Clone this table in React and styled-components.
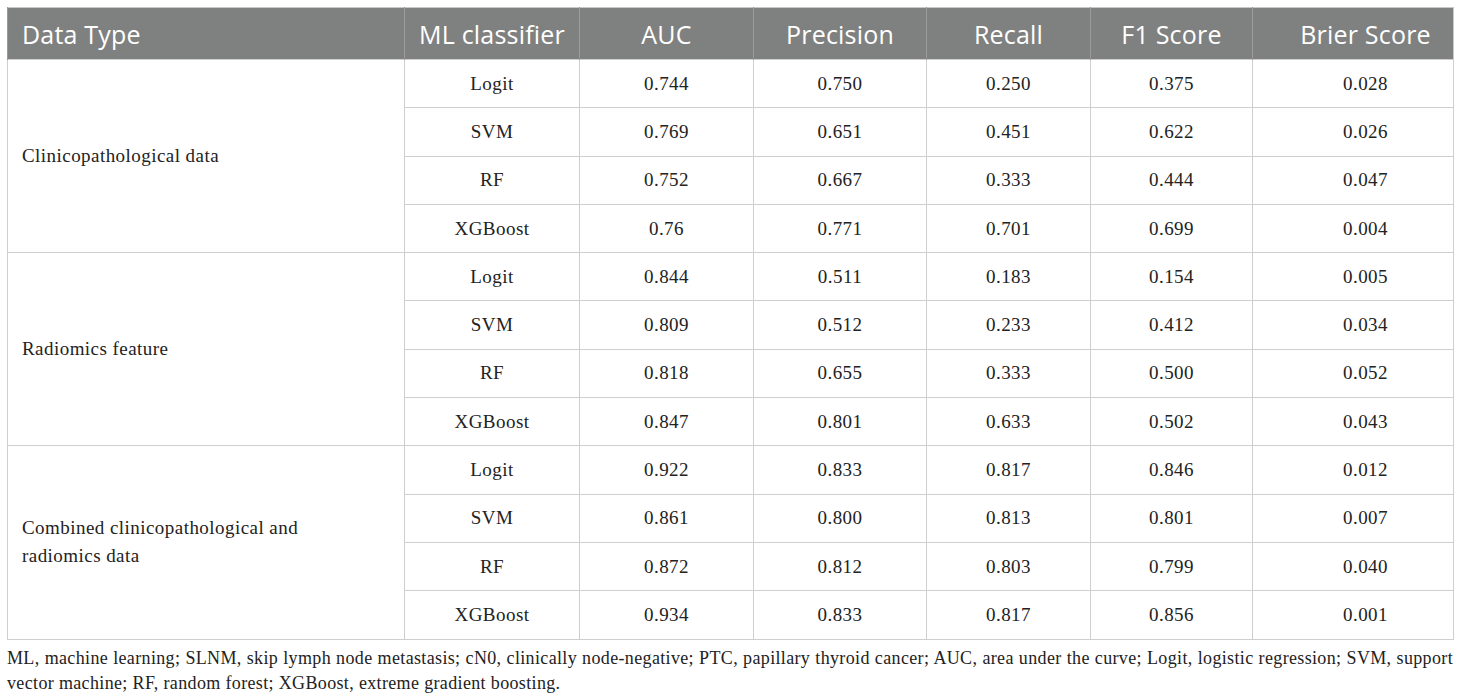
import React from 'react';
import styled, { createGlobalStyle } from 'styled-components';

const GlobalStyle = createGlobalStyle`
    html, body {
        margin: 0;
        padding: 0;
        background: #ffffff;
    }
`;

const Page = styled.div`
    padding: 7px 7px 0 7px;
    width: 1446px;
`;

const Table = styled.table`
    width: 1446px;
    border-collapse: collapse;
    table-layout: fixed;
    border: 1px solid #c9c9c9;
`;

const HeadCell = styled.th`
    height: 51px;
    padding: 0 14px 0 ${p => (p.$shift ? '39px' : '14px')};
    background-color: #7f8180;
    color: #ffffff;
    font-family: "Open Sans", "Liberation Sans", sans-serif;
    font-size: 25px;
    font-weight: 400;
    letter-spacing: 0.2px;
    text-align: ${p => (p.$left ? 'left' : 'center')};
    border-left: 1px solid #9a9b9a;
    white-space: nowrap;
`;

const Cell = styled.td`
    height: 47.3px;
    padding: 0 14px 0 ${p => (p.$shift ? '39px' : '14px')};
    border: 1px solid #cfcfcf;
    font-family: "Liberation Serif", "Times New Roman", serif;
    font-size: 19px;
    letter-spacing: 0.45px;
    color: #222222;
    text-align: ${p => (p.$left ? 'left' : 'center')};
    vertical-align: middle;
    line-height: 28px;
`;

const Note = styled.div`
    margin-top: 6px;
    font-family: "Liberation Serif", "Times New Roman", serif;
    font-size: 18px;
    letter-spacing: 0.35px;
    line-height: 25px;
    color: #222222;
`;

const NoteLine = styled.div`
    white-space: nowrap;
    text-align: ${p => (p.$justify ? 'justify' : 'left')};
    text-align-last: ${p => (p.$justify ? 'justify' : 'auto')};
`;

const columns = [
    { label: 'Data Type', width: 397, left: true },
    { label: 'ML classifier', width: 175 },
    { label: 'AUC', width: 174 },
    { label: 'Precision', width: 173 },
    { label: 'Recall', width: 164 },
    { label: 'F1 Score', width: 162 },
    { label: 'Brier Score', width: 201, shift: true },
];

const groups = [
    {
        name: 'Clinicopathological data',
        rows: [
            ['Logit', '0.744', '0.750', '0.250', '0.375', '0.028'],
            ['SVM', '0.769', '0.651', '0.451', '0.622', '0.026'],
            ['RF', '0.752', '0.667', '0.333', '0.444', '0.047'],
            ['XGBoost', '0.76', '0.771', '0.701', '0.699', '0.004'],
        ],
    },
    {
        name: 'Radiomics feature',
        rows: [
            ['Logit', '0.844', '0.511', '0.183', '0.154', '0.005'],
            ['SVM', '0.809', '0.512', '0.233', '0.412', '0.034'],
            ['RF', '0.818', '0.655', '0.333', '0.500', '0.052'],
            ['XGBoost', '0.847', '0.801', '0.633', '0.502', '0.043'],
        ],
    },
    {
        name: (
            <>
                Combined clinicopathological and
                <br />
                radiomics data
            </>
        ),
        rows: [
            ['Logit', '0.922', '0.833', '0.817', '0.846', '0.012'],
            ['SVM', '0.861', '0.800', '0.813', '0.801', '0.007'],
            ['RF', '0.872', '0.812', '0.803', '0.799', '0.040'],
            ['XGBoost', '0.934', '0.833', '0.817', '0.856', '0.001'],
        ],
    },
];

export default function App() {
    return (
        <Page>
            <GlobalStyle />
            <Table>
                <colgroup>
                    {columns.map(c => (
                        <col key={c.label} style={{ width: c.width }} />
                    ))}
                </colgroup>
                <thead>
                    <tr>
                        {columns.map(c => (
                            <HeadCell key={c.label} $left={c.left} $shift={c.shift}>{c.label}</HeadCell>
                        ))}
                    </tr>
                </thead>
                <tbody>
                    {groups.map((g, gi) =>
                        g.rows.map((r, ri) => (
                            <tr key={`${gi}-${ri}`}>
                                {ri === 0 && (
                                    <Cell $left rowSpan={g.rows.length}>{g.name}</Cell>
                                )}
                                {r.map((v, vi) => (
                                    <Cell key={vi} $shift={vi === r.length - 1}>{v}</Cell>
                                ))}
                            </tr>
                        ))
                    )}
                </tbody>
            </Table>
            <Note>
                <NoteLine $justify>
                    ML, machine learning; SLNM, skip lymph node metastasis; cN0, clinically node-negative; PTC,
                    papillary thyroid cancer; AUC, area under the curve; Logit, logistic regression; SVM, support
                </NoteLine>
                <NoteLine>
                    vector machine; RF, random forest; XGBoost, extreme gradient boosting.
                </NoteLine>
            </Note>
        </Page>
    );
}
